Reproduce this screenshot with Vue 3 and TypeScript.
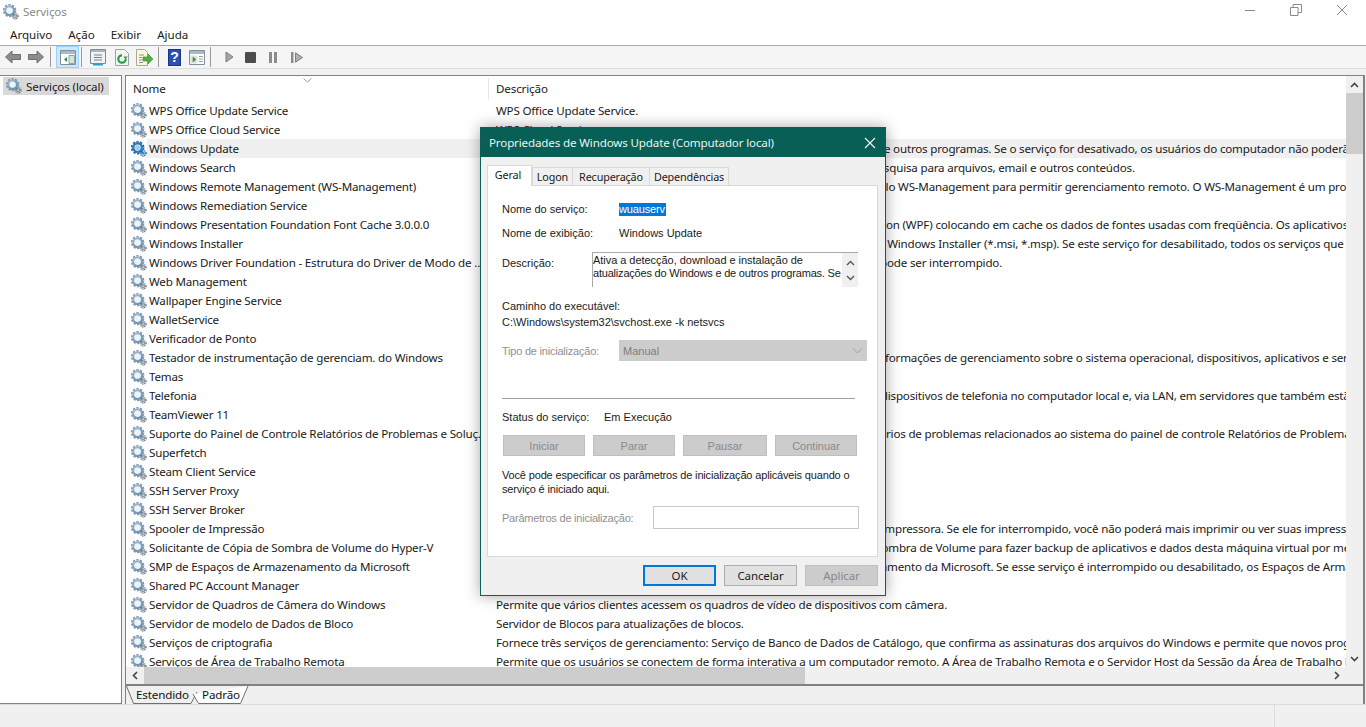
<template>
  <div class="window">
    <svg class="defs" width="0" height="0">
      <defs>
        <radialGradient id="gearFill" cx="40%" cy="35%" r="70%">
          <stop offset="0%" stop-color="#c4d4e2" />
          <stop offset="100%" stop-color="#6d90b0" />
        </radialGradient>
        <symbol id="gear" viewBox="0 0 16 16">
          <circle cx="6.6" cy="6.6" r="5.9" fill="none" stroke="#7d9ab5" stroke-width="1.7" stroke-dasharray="2.2 1.5" />
          <circle cx="6.6" cy="6.6" r="4.3" fill="none" stroke="url(#gearFill)" stroke-width="2.2" />
          <circle cx="6.6" cy="6.6" r="2.9" fill="#eef3f7" />
          <circle cx="12.2" cy="12.2" r="2.8" fill="none" stroke="#70808e" stroke-width="1.4" stroke-dasharray="1.2 .8" />
          <circle cx="12.2" cy="12.2" r="1.6" fill="#b9c6d1" stroke="#5d7286" stroke-width=".7" />
        </symbol>
        <symbol id="gear-active" viewBox="0 0 16 16">
          <circle cx="6.6" cy="6.6" r="5.9" fill="none" stroke="#1e6fae" stroke-width="1.9" stroke-dasharray="2.2 1.5" />
          <circle cx="6.6" cy="6.6" r="4.3" fill="none" stroke="#2a7cbd" stroke-width="2.4" />
          <circle cx="6.6" cy="6.6" r="2.6" fill="#a8cbe6" />
          <circle cx="12.2" cy="12.2" r="2.8" fill="none" stroke="#1c5f94" stroke-width="1.5" stroke-dasharray="1.2 .8" />
          <circle cx="12.2" cy="12.2" r="1.6" fill="#3f8cc6" />
        </symbol>
      </defs>
    </svg>

    <header class="title-bar">
      <svg class="title-icon" width="16" height="16"><use href="#gear" /></svg>
      <span class="title-text">Serviços</span>
      <div class="window-btns">
        <svg width="12" height="12" viewBox="0 0 12 12"><path d="M1 6.5h10" stroke="#8a8a8a" fill="none" /></svg>
        <svg width="12" height="12" viewBox="0 0 12 12"><path d="M.5 3.5h7.500v8h-7.500zM3 3.500v-3h8.500v8h-3.500" stroke="#8a8a8a" fill="none" /></svg>
        <svg width="12" height="12" viewBox="0 0 12 12"><path d="M1 1l10 10M11 1L1 11" stroke="#8a8a8a" fill="none" /></svg>
      </div>
    </header>

    <nav class="menu-bar">
      <span v-for="item in menuItems" :key="item">{{ item }}</span>
    </nav>

    <div class="toolbar">
      <svg class="tool" width="16" height="14" viewBox="0 0 16 14"><path d="M.5 7L7 1v3.500h8.500v5H7V13z" fill="#8d8d8d" stroke="#6e6e6e" /></svg>
      <svg class="tool ml7" width="16" height="14" viewBox="0 0 16 14"><path d="M15.500 7L9 1v3.500H.5v5H9V13z" fill="#8d8d8d" stroke="#6e6e6e" /></svg>
      <i class="sep ml6"></i>
      <div class="tool-active">
        <svg width="16" height="15" viewBox="0 0 16 15"><path d="M.5.5h15v14H.5z" fill="#fff" stroke="#7f8f9b" /><path d="M1 1h14v3H1z" fill="#a9bac6" /><path d="M9 5.500h5.500v8H9z" fill="#d7e6dc" stroke="#8ea69a" /><path d="M7 7v5L4 9.500z" fill="#2d8a4e" /></svg>
      </div>
      <i class="sep ml2"></i>
      <svg class="tool ml8" width="16" height="17" viewBox="0 0 16 17"><path d="M.5.5h15v14H.5z" fill="#eef2f4" stroke="#7f8a92" /><path d="M1 1h14v2H1z" fill="#a9b6bf" /><path d="M4 6h8M4 8.500h8M4 11h8" stroke="#77838b" /><path d="M3 15.500h10" stroke="#2f9bd0" stroke-width="2" /></svg>
      <svg class="tool ml9" width="14" height="17" viewBox="0 0 14 17"><path d="M.5.5h9l4 4v12H.5z" fill="#f4f7f2" stroke="#9aa5a0" /><circle cx="7" cy="10" r="3.700" fill="none" stroke="#2d9a45" stroke-width="2.200" stroke-dasharray="17 6" /><path d="M10.500 10.500l2-3h-4z" fill="#2d9a45" /></svg>
      <svg class="tool ml7" width="17" height="17" viewBox="0 0 17 17"><path d="M.5.5h8l3 3v13H.5z" fill="#faf7dd" stroke="#a9a796" /><path d="M3 6h5M3 8.500h3M3 11h3M3 13.500h4" stroke="#8d9195" /><path d="M7 8h5V5l5 5-5 5v-3H7z" fill="#52b043" stroke="#3b8a33" stroke-width=".6" /></svg>
      <i class="sep ml5"></i>
      <div class="help-icon">?</div>
      <svg class="tool ml8" width="16" height="15" viewBox="0 0 16 15"><path d="M.5.5h15v14H.5z" fill="#fff" stroke="#7f8f9b" /><path d="M1 1h14v3H1z" fill="#a9bac6" /><path d="M1.500 5.500h7v8h-7z" fill="#d7e6dc" /><path d="M4 7v5l3-2.500zM10 6.500h4M10 9h4M10 11.500h4" fill="#2d8a4e" stroke="#7d8c86" stroke-width=".8" /></svg>
      <i class="sep ml5"></i>
      <svg class="tool ml14" width="9" height="12" viewBox="0 0 9 12"><path d="M1 1l7 5-7 5z" fill="#a7a7a7" stroke="#7d7d7d" /></svg>
      <svg class="tool ml11" width="11" height="11" viewBox="0 0 11 11"><rect width="11" height="11" rx="1" fill="#4d4d4d" /></svg>
      <svg class="tool ml13" width="8" height="11" viewBox="0 0 8 11"><path d="M0 0h3v11H0zM5 0h3v11H5z" fill="#8c8c8c" /></svg>
      <svg class="tool ml14" width="12" height="11" viewBox="0 0 12 11"><path d="M0 0h2.500v11H0z" fill="#8c8c8c" /><path d="M4.500 .8l7 4.700-7 4.700z" fill="#b0b0b0" stroke="#7d7d7d" /></svg>
    </div>

    <main class="content">
      <aside class="tree">
        <div class="tree-item">
          <svg width="16" height="16"><use href="#gear" /></svg>
          <span>Serviços (local)</span>
        </div>
      </aside>

      <section class="details">
        <div class="list-wrap">
          <div class="list">
            <div class="list-head">
              <span class="sort">
                <svg width="9" height="5" viewBox="0 0 9 5"><path d="M.5.5l4 3.500 4-3.500" fill="none" stroke="#9a9a9a" /></svg>
              </span>
              <div class="col-name">Nome</div>
              <div class="col-desc">Descrição</div>
            </div>
            <div
              v-for="svc in services"
              :key="svc.name"
              class="row"
              :class="{ selected: svc.name === 'Windows Update' }"
            >
              <svg class="row-icon" width="16" height="16">
                <use :href="svc.name === 'Windows Update' ? '#gear-active' : '#gear'" />
              </svg>
              <div class="cell-name">{{ svc.name }}</div>
              <div class="cell-desc">{{ svc.desc }}</div>
            </div>
          </div>
          <div class="vscroll">
            <div class="arrow-box">
              <svg width="9" height="6" viewBox="0 0 9 6"><path d="M1 5l3.500-3.500L8 5" fill="none" stroke="#444" stroke-width="1.600" /></svg>
            </div>
            <div class="vthumb"></div>
            <div class="vtrack"></div>
            <div class="arrow-box">
              <svg width="9" height="6" viewBox="0 0 9 6"><path d="M1 1l3.500 3.500L8 1" fill="none" stroke="#444" stroke-width="1.600" /></svg>
            </div>
          </div>
        </div>
        <div class="hscroll">
          <div class="harrow">
            <svg width="6" height="9" viewBox="0 0 6 9"><path d="M5 1L1.500 4.500 5 8" fill="none" stroke="#444" stroke-width="1.600" /></svg>
          </div>
          <div class="hthumb"></div>
          <div class="htrack"></div>
          <div class="harrow">
            <svg width="6" height="9" viewBox="0 0 6 9"><path d="M1 1l3.500 3.500L1 8" fill="none" stroke="#444" stroke-width="1.600" /></svg>
          </div>
          <div class="hcorner"></div>
        </div>
        <div class="view-tabs">
          <svg class="tab-shapes" width="126" height="18" viewBox="0 0 126 18">
            <path d="M.5 0L7.500 17.500H65L71 6" fill="#f0f0f0" stroke="#6e6e6e" />
            <path d="M67 8L72.500 17.500H114.500L122 0" fill="#fff" stroke="#6e6e6e" />
          </svg>
          <span class="view-tab">Estendido</span>
          <span class="view-tab">Padrão</span>
        </div>
      </section>
    </main>

    <footer class="status-bar">
      <div class="status-cell"></div>
    </footer>

    <div class="dialog">
      <div class="dialog-title">
        <span>Propriedades de Windows Update (Computador local)</span>
        <svg width="12" height="12" viewBox="0 0 12 12"><path d="M1 1l10 10M11 1L1 11" stroke="#fff" stroke-width="1.100" fill="none" /></svg>
      </div>
      <div class="dialog-body">
        <div class="tabs">
          <span v-for="(tab, i) in dialogTabs" :key="tab" class="tab" :class="{ current: i === 0 }">{{ tab }}</span>
        </div>
        <div class="panel">
          <div class="field f-name">
            <label class="lbl-wide">Nome do serviço:</label>
            <span class="picked">wuauserv</span>
          </div>
          <div class="field f-display">
            <label class="lbl-wide">Nome de exibição:</label>
            <span>Windows Update</span>
          </div>
          <div class="f-desc">
            <label class="lbl-desc">Descrição:</label>
            <div class="memo">
              <div class="memo-text">Ativa a detecção, download e instalação de<br /><span class="memo-tight">atualizações do Windows e de outros programas. Se</span></div>
              <div class="memo-scroll">
                <svg width="9" height="6" viewBox="0 0 9 6"><path d="M1 5l3.500-3.500L8 5" fill="none" stroke="#555" stroke-width="1.400" /></svg>
                <svg width="9" height="6" viewBox="0 0 9 6"><path d="M1 1l3.500 3.500L8 1" fill="none" stroke="#555" stroke-width="1.400" /></svg>
              </div>
            </div>
          </div>
          <div class="path-label">Caminho do executável:</div>
          <div class="path-value">C:\Windows\system32\svchost.exe -k netsvcs</div>
          <div class="field f-startup">
            <label class="lbl-wide muted">Tipo de inicialização:</label>
            <div class="combo">
              <span>Manual</span>
              <svg width="11" height="6" viewBox="0 0 11 6"><path d="M1 .5l4.500 4.500L10 .5" fill="none" stroke="#a0a0a0" /></svg>
            </div>
          </div>
          <div class="rule"></div>
          <div class="field f-status">
            <label class="lbl-status">Status do serviço:</label>
            <span>Em Execução</span>
          </div>
          <div class="svc-btns">
            <span v-for="b in serviceButtons" :key="b" class="svc-btn">{{ b }}</span>
          </div>
          <p class="hint">Você pode especificar os parâmetros de inicialização aplicáveis quando o<br />serviço é iniciado aqui.</p>
          <div class="field f-params">
            <label class="lbl-params muted">Parâmetros de inicialização:</label>
            <div class="param-input"></div>
          </div>
        </div>
        <div class="dialog-btns">
          <span class="btn default">OK</span>
          <span class="btn">Cancelar</span>
          <span class="btn off">Aplicar</span>
        </div>
      </div>
    </div>
  </div>
</template>

<script setup lang="ts">
interface Service {
  name: string;
  desc: string;
}

const menuItems = ["Arquivo", "Ação", "Exibir", "Ajuda"];
const dialogTabs = ["Geral", "Logon", "Recuperação", "Dependências"];
const serviceButtons = ["Iniciar", "Parar", "Pausar", "Continuar"];

const services: Service[] = [
  { name: "WPS Office Update Service", desc: "WPS Office Update Service." },
  { name: "WPS Office Cloud Service", desc: "WPS Cloud Service" },
  { name: "Windows Update", desc: "Ativa a detecção, download e a instalação de atualizações do Windows e de outros programas. Se o serviço for desativado, os usuários do computador não poderão usar o Windows Update" },
  { name: "Windows Search", desc: "Fornece indexação de conteúdo, cache de propriedade e resultados de pesquisa para arquivos, email e outros conteúdos." },
  { name: "Windows Remote Management (WS-Management)", desc: "O serviço Gerenciamento Remoto do Windows (WinRM) executa o protocolo WS-Management para permitir gerenciamento remoto. O WS-Management é um protocolo padrão" },
  { name: "Windows Remediation Service", desc: "" },
  { name: "Windows Presentation Foundation Font Cache 3.0.0.0", desc: "Otimiza o desempenho dos aplicativos do Windows Presentation Foundation (WPF) colocando em cache os dados de fontes usadas com freqüência. Os aplicativos WPF iniciarão" },
  { name: "Windows Installer", desc: "Adiciona, modifica e remove os aplicativos fornecidos como um pacote do Windows Installer (*.msi, *.msp). Se este serviço for desabilitado, todos os serviços que dependem" },
  { name: "Windows Driver Foundation - Estrutura do Driver de Modo de Usuário", desc: "Gerencia processos de host de driver no modo de usuário. O serviço não pode ser interrompido." },
  { name: "Web Management", desc: "" },
  { name: "Wallpaper Engine Service", desc: "" },
  { name: "WalletService", desc: "" },
  { name: "Verificador de Ponto", desc: "" },
  { name: "Testador de instrumentação de gerenciam. do Windows", desc: "Fornece uma interface comum e um modelo de objetos para acessar as informações de gerenciamento sobre o sistema operacional, dispositivos, aplicativos e serviços." },
  { name: "Temas", desc: "" },
  { name: "Telefonia", desc: "Oferece suporte à API de Telefonia (TAPI) para programas que controlam dispositivos de telefonia no computador local e, via LAN, em servidores que também estão executando" },
  { name: "TeamViewer 11", desc: "" },
  { name: "Suporte do Painel de Controle Relatórios de Problemas e Soluções", desc: "Este serviço oferece suporte para a exibição, o envio e a exclusão de relatórios de problemas relacionados ao sistema do painel de controle Relatórios de Problemas e Soluções" },
  { name: "Superfetch", desc: "" },
  { name: "Steam Client Service", desc: "" },
  { name: "SSH Server Proxy", desc: "" },
  { name: "SSH Server Broker", desc: "" },
  { name: "Spooler de Impressão", desc: "Este serviço faz o spool de tarefas de impressão e gere a interação com a impressora. Se ele for interrompido, você não poderá mais imprimir ou ver suas impressoras" },
  { name: "Solicitante de Cópia de Sombra de Volume do Hyper-V", desc: "Coordena as comunicações necessárias para usar o Serviço de Cópia de Sombra de Volume para fazer backup de aplicativos e dados desta máquina virtual por meio do host" },
  { name: "SMP de Espaços de Armazenamento da Microsoft", desc: "Serviço de host para provedor de gerenciamento de Espaços de Armazenamento da Microsoft. Se esse serviço é interrompido ou desabilitado, os Espaços de Armazenamento" },
  { name: "Shared PC Account Manager", desc: "" },
  { name: "Servidor de Quadros de Câmera do Windows", desc: "Permite que vários clientes acessem os quadros de vídeo de dispositivos com câmera." },
  { name: "Servidor de modelo de Dados de Bloco", desc: "Servidor de Blocos para atualizações de blocos." },
  { name: "Serviços de criptografia", desc: "Fornece três serviços de gerenciamento: Serviço de Banco de Dados de Catálogo, que confirma as assinaturas dos arquivos do Windows e permite que novos programas sejam" },
  { name: "Serviços de Área de Trabalho Remota", desc: "Permite que os usuários se conectem de forma interativa a um computador remoto. A Área de Trabalho Remota e o Servidor Host da Sessão da Área de Trabalho Remota" },
];
</script>

<style>
html,
body {
  margin: 0;
  overflow: hidden;
  background: #f0f0f0;
}
</style>

<style scoped>
.window {
  position: relative;
  display: flex;
  flex-direction: column;
  width: 1366px;
  height: 727px;
  overflow: hidden;
  background: #f0f0f0;
  color: #1a1a1a;
  font-family: "Noto Sans", "Open Sans", sans-serif;
  font-size: 11.6px;
  letter-spacing: -0.13px;
}

.defs {
  position: absolute;
}

.title-bar {
  display: flex;
  align-items: center;
  height: 23px;
  padding-left: 3px;
  background: #fff;
}

.title-icon {
  margin-right: 4px;
}

.title-text {
  color: #8a8a8a;
}

.window-btns {
  display: flex;
  gap: 34px;
  margin-left: auto;
  margin-right: 18px;
  margin-top: -3px;
}

.menu-bar {
  display: flex;
  height: 22px;
  align-items: center;
  gap: 16px;
  padding-left: 10px;
  background: #fff;
  border-bottom: 1px solid #a9a9a9;
  letter-spacing: 0;
}

.toolbar {
  display: flex;
  align-items: center;
  height: 22px;
  padding-left: 5px;
  background: #f5f5f5;
  border-bottom: 1px solid #dedede;
}

.tool {
  flex: none;
}

.ml2 {
  margin-left: 2px;
}

.ml5 {
  margin-left: 5px;
}

.ml6 {
  margin-left: 6px;
}

.ml7 {
  margin-left: 7px;
}

.ml8 {
  margin-left: 8px;
}

.ml9 {
  margin-left: 9px;
}

.ml11 {
  margin-left: 11px;
}

.ml13 {
  margin-left: 13px;
}

.ml14 {
  margin-left: 14px;
}

.sep {
  flex: none;
  width: 1px;
  height: 20px;
  background: #9a9a9a;
}

.tool-active {
  display: flex;
  align-items: center;
  justify-content: center;
  box-sizing: border-box;
  width: 23px;
  height: 22px;
  margin-left: 5px;
  background: #cce8ff;
  border: 1px solid #99d1ff;
}

.help-icon {
  flex: none;
  box-sizing: border-box;
  width: 13px;
  height: 17px;
  margin-left: 9px;
  background: #2c4fb5;
  border: 1px solid #1c3283;
  color: #fff;
  font: bold 14px/15px "Liberation Sans", sans-serif;
  text-align: center;
}

.content {
  display: flex;
  flex: 1;
  min-height: 0;
  gap: 3px;
  margin-top: 6px;
}

.tree {
  box-sizing: border-box;
  width: 122px;
  padding: 1px 12px 0 3px;
  background: #fff;
  border: 1px solid #828282;
  border-left-width: 0;
}

.tree-item {
  display: flex;
  align-items: center;
  gap: 4px;
  height: 18px;
  padding-left: 3px;
  background: #d9d9d9;
  white-space: nowrap;
}

.details {
  display: flex;
  flex-direction: column;
  width: 1237px;
  border: 1px solid #828282;
  border-bottom: 0;
  border-right-width: 2px;
}

.list-wrap {
  display: flex;
  flex: 1;
  min-height: 0;
}

.list {
  position: relative;
  flex: 1;
  min-width: 0;
  overflow: hidden;
  background: #fff;
}

.list-head {
  position: relative;
  display: flex;
  box-sizing: border-box;
  height: 25px;
  align-items: flex-end;
  padding-bottom: 2px;
  line-height: 21px;
}

.sort {
  position: absolute;
  top: 2px;
  left: 177px;
  line-height: 0;
}

.col-name {
  flex: none;
  box-sizing: border-box;
  width: 363px;
  padding-left: 7px;
  border-right: 1px solid #e5e5e5;
}

.col-desc {
  padding-left: 7px;
}

.row {
  position: relative;
  display: flex;
  align-items: center;
  height: 19px;
  white-space: nowrap;
  letter-spacing: -0.19px;
}

.row-icon {
  flex: none;
  margin-left: 5px;
}

.cell-name {
  flex: none;
  width: 340px;
  margin-left: 2px;
  padding-bottom: 1px;
  overflow: hidden;
  text-overflow: ellipsis;
}

.cell-desc {
  flex: none;
  margin-left: 7px;
  padding-bottom: 1px;
}

.selected::before {
  content: "";
  position: absolute;
  top: 0;
  right: 0;
  bottom: 0;
  left: 21px;
  background: #f0f0f0;
}

.selected > * {
  position: relative;
}

.vscroll {
  display: flex;
  flex: none;
  flex-direction: column;
  width: 17px;
  background: #f0f0f0;
}

.arrow-box {
  display: flex;
  flex: none;
  align-items: center;
  justify-content: center;
  height: 17px;
}

.vthumb {
  flex: none;
  height: 61px;
  background: #cdcdcd;
}

.vtrack {
  flex: 1;
}

.hscroll {
  display: flex;
  flex: none;
  height: 17px;
  background: #f0f0f0;
  border-bottom: 2px solid #828282;
}

.harrow {
  display: flex;
  flex: none;
  align-items: center;
  justify-content: center;
  width: 18px;
}

.hthumb {
  flex: none;
  width: 661px;
  background: #cdcdcd;
}

.htrack {
  flex: 1;
}

.hcorner {
  flex: none;
  width: 17px;
}

.view-tabs {
  position: relative;
  display: flex;
  height: 18px;
  gap: 13px;
  padding-left: 10px;
  line-height: 17px;
}

.tab-shapes {
  position: absolute;
  top: 0;
  left: 0;
}

.view-tab {
  position: relative;
  color: #111;
}

.status-bar {
  display: flex;
  justify-content: flex-end;
  height: 22px;
  border-top: 1px solid #dcdcdc;
}

.status-cell {
  width: 91px;
  border-left: 1px solid #dcdcdc;
}

.dialog {
  position: absolute;
  top: 127px;
  left: 480px;
  box-sizing: border-box;
  width: 406px;
  height: 469px;
  background: #f0f0f0;
  border: 1px solid #0b5f56;
  box-shadow: 0 0 14px rgba(0, 0, 0, 0.35);
  color: #1a1a1a;
  font-family: "Liberation Sans", Arial, sans-serif;
  font-size: 11px;
  letter-spacing: 0;
}

.dialog-title {
  display: flex;
  align-items: center;
  justify-content: space-between;
  height: 29px;
  padding: 0 9px 0 8px;
  background: #075f55;
  color: #eaf3f1;
  font-family: "Noto Sans", sans-serif;
  font-size: 11.6px;
  letter-spacing: -0.15px;
}

.dialog-body {
  padding: 8px 7px 0 6px;
}

.tabs {
  display: flex;
  align-items: flex-end;
  height: 20px;
  font-family: "Noto Sans", sans-serif;
  font-size: 10.8px;
  letter-spacing: -0.15px;
}

.tab {
  box-sizing: border-box;
  height: 18px;
  margin-left: -1px;
  background: #f0f0f0;
  border: 1px solid #d9d9d9;
  border-bottom: 0;
  line-height: 18px;
  text-align: center;
}

.tab.current {
  position: relative;
  z-index: 1;
  height: 21px;
  width: 45px;
  margin: 0 0 -1px;
  padding-right: 3px;
  background: #fff;
  line-height: 18px;
}

.tab:nth-child(2) {
  width: 41px;
  margin-left: 0;
}

.tab:nth-child(3) {
  width: 78px;
}

.tab:nth-child(4) {
  width: 80px;
}

.panel {
  box-sizing: border-box;
  height: 372px;
  padding: 0 0 0 14px;
  background: #fff;
  border: 1px solid #d9d9d9;
}

.field {
  display: flex;
  align-items: center;
}

.f-name {
  height: 14px;
  margin-top: 16px;
}

.lbl-wide {
  flex: none;
  width: 117px;
}

.picked {
  background: #0078d7;
  color: #fff;
  padding-right: 1px;
  line-height: 13px;
  letter-spacing: -0.15px;
}

.f-display {
  height: 14px;
  margin-top: 10px;
}

.f-desc {
  display: flex;
  margin-top: 12px;
}

.lbl-desc {
  flex: none;
  width: 90px;
  padding-top: 5px;
}

.memo {
  display: flex;
  width: 266px;
  height: 35px;
  box-sizing: border-box;
  border-top: 1px solid #a9a9a9;
  border-left: 1px solid #a9a9a9;
  line-height: 13px;
}

.memo-text {
  flex: 1;
  white-space: nowrap;
  overflow: hidden;
  padding-top: 1px;
  letter-spacing: -0.04px;
}

.memo-tight {
  letter-spacing: -0.2px;
}

.memo-scroll {
  display: flex;
  flex: none;
  flex-direction: column;
  align-items: center;
  justify-content: space-around;
  width: 16px;
  background: #f0f0f0;
  padding: 2px 0;
  box-sizing: border-box;
}

.path-label {
  height: 14px;
  margin-top: 12px;
  line-height: 14px;
}

.path-value {
  height: 14px;
  margin-top: 2px;
  line-height: 14px;
}

.f-startup {
  margin-top: 11px;
}

.muted {
  color: #8f8f8f;
  letter-spacing: -0.22px;
}

.combo {
  display: flex;
  align-items: center;
  justify-content: space-between;
  box-sizing: border-box;
  width: 248px;
  height: 21px;
  padding: 0 4px;
  background: #cccccc;
  color: #7c7c7c;
}

.rule {
  width: 353px;
  height: 1px;
  margin-top: 37px;
  background: #a0a0a0;
}

.f-status {
  height: 14px;
  margin-top: 11px;
}

.lbl-status {
  flex: none;
  width: 102px;
}

.svc-btns {
  display: flex;
  gap: 8px;
  margin: 11px 0 0 1px;
}

.svc-btn {
  display: flex;
  align-items: center;
  justify-content: center;
  box-sizing: border-box;
  width: 82px;
  height: 21px;
  background: #cccccc;
  color: #8a8a8a;
  border: 1px solid #bfbfbf;
}

.svc-btn:nth-child(3) {
  width: 84px;
}

.hint {
  margin: 12px 0 0;
  line-height: 14px;
  letter-spacing: -0.16px;
}

.f-params {
  margin-top: 10px;
}

.lbl-params {
  flex: none;
  width: 151px;
}

.param-input {
  box-sizing: border-box;
  width: 206px;
  height: 23px;
  background: #fff;
  border: 1px solid #c8c8c8;
}

.dialog-btns {
  display: flex;
  justify-content: flex-end;
  gap: 8px;
  margin-top: 8px;
}

.btn {
  display: flex;
  align-items: center;
  justify-content: center;
  box-sizing: border-box;
  width: 73px;
  height: 21px;
  background: #e1e1e1;
  border: 1px solid #adadad;
  font-family: "Noto Sans", sans-serif;
  font-size: 11.5px;
  letter-spacing: -0.1px;
}

.btn.default {
  border: 2px solid #0078d7;
}

.btn.off {
  background: #cccccc;
  color: #888;
  border-color: #bfbfbf;
}
</style>
